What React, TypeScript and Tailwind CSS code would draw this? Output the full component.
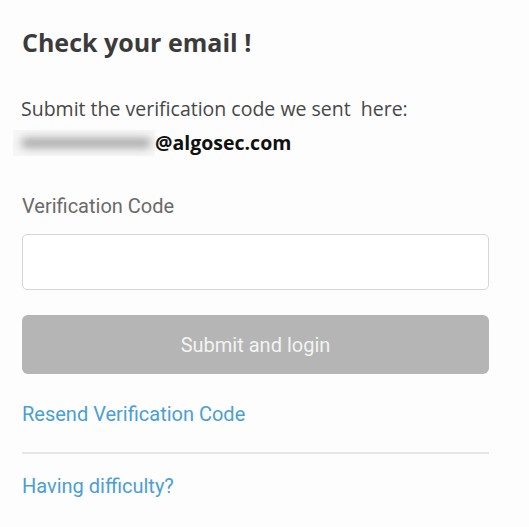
export default function App() {
  return (
    <div className="w-[529px] h-[527px] bg-[#fdfdfd] overflow-hidden">
      <div className="flex flex-col px-[22px] pt-[26px]">
        <h1 className="font-['Open_Sans',sans-serif] font-bold text-[25px] leading-[32px] text-[#3b3b3b]">
          Check your email !
        </h1>
        <p className="mt-[38px] font-['Open_Sans',sans-serif] text-[19.5px] leading-[26px] text-[#474747] -ml-[1px]">
          Submit the verification code we sent&nbsp; here:
        </p>
        <div className="mt-[8px] -ml-[9px] flex items-center h-[26px]">
          <div className="w-[142px] h-[26px] flex items-center bg-[#f6f6f6]">
            <div className="ml-[8px] w-[130px] h-[10px] rounded-full bg-[#a8a8a8] blur-[4px]" />
          </div>
          <span className="font-['Open_Sans',sans-serif] font-bold text-[19.5px] leading-[26px] text-[#111]">
            @algosec.com
          </span>
        </div>
        <label className="mt-[38px] font-['Roboto',sans-serif] text-[20px] leading-[24px] text-[#6a6a6a]">
          Verification Code
        </label>
        <input
          type="text"
          className="mt-[16px] w-[467px] h-[56px] rounded-[5px] border border-[#d6d6d6] bg-white outline-none"
        />
        <button className="mt-[25px] w-[467px] h-[59px] rounded-[6px] bg-[#b5b5b5] font-['Roboto',sans-serif] text-[20px] text-[#f3f3f3]">
          Submit and login
        </button>
        <a className="mt-[28px] font-['Roboto',sans-serif] text-[20px] leading-[24px] text-[#4a9fd6]">
          Resend Verification Code
        </a>
        <div className="mt-[26px] w-[467px] h-[2px] bg-[#e6e6e6]" />
        <a className="mt-[20px] font-['Roboto',sans-serif] text-[20px] leading-[24px] text-[#4a9fd6]">
          Having difficulty?
        </a>
      </div>
    </div>
  );
}
